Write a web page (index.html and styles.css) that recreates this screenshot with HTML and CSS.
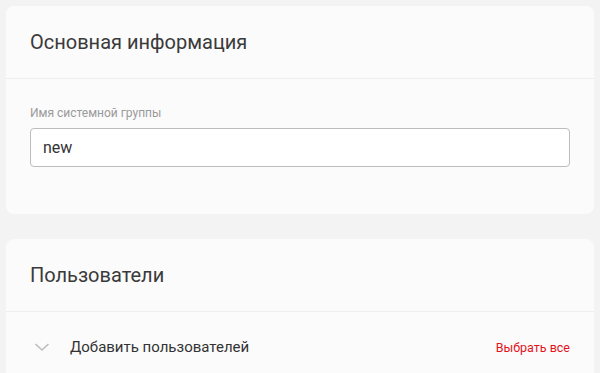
FILE: index.html
```html
<!DOCTYPE html>
<html lang="ru">
<head>
    <meta charset="UTF-8">
    <title>Системная группа</title>
    <link rel="stylesheet" href="styles.css">
</head>
<body>
    <div class="page">
        <div class="card">
            <div class="card-head">Основная информация</div>
            <div class="card-body">
                <label class="field-label" for="groupName">Имя системной группы</label>
                <input type="text" id="groupName" class="field-input" value="new">
            </div>
        </div>
        <div class="card">
            <div class="card-head">Пользователи</div>
            <div class="users-row">
                <svg class="chevron" width="16" height="10" viewBox="0 0 16 10">
                    <polyline points="1.5,2 8,8 14.5,2" fill="none" stroke="#bdbdbd" stroke-width="1.6"/>
                </svg>
                <span class="users-title">Добавить пользователей</span>
                <a class="select-all" href="#">Выбрать все</a>
            </div>
        </div>
    </div>
</body>
</html>
```
FILE: styles.css
```css
body {
    margin: 0;
    background-color: #f3f3f3;
    font-family: Roboto, "Noto Sans", sans-serif;
    color: #333;
}
.page {
    display: flex;
    flex-direction: column;
    gap: 25px;
    padding: 6px;
}
.card {
    background-color: #fbfbfb;
    border-radius: 8px;
}
.card-head {
    font-size: 20px;
    color: #3a3a3a;
    padding: 0 24px;
    height: 72px;
    line-height: 72px;
    border-bottom: 1px solid #eeeeee;
}
.card-body {
    display: flex;
    flex-direction: column;
    padding: 27px 24px 47px;
}
.field-label {
    font-size: 12px;
    color: #9a9a9a;
    margin-bottom: 8px;
}
.field-input {
    height: 39px;
    box-sizing: border-box;
    border: 1px solid #bcbcbc;
    border-radius: 4px;
    background-color: #fff;
    padding: 0 12px;
    font-family: inherit;
    font-size: 16px;
    color: #333;
    outline: none;
}
.users-row {
    display: flex;
    align-items: center;
    padding: 0 24px 0 28px;
    height: 70px;
}
.chevron {
    margin-right: 20px;
}
.users-title {
    flex: 1;
    font-size: 15px;
    color: #333;
}
.select-all {
    font-size: 12.5px;
    color: #e3141b;
    text-decoration: none;
}
```
